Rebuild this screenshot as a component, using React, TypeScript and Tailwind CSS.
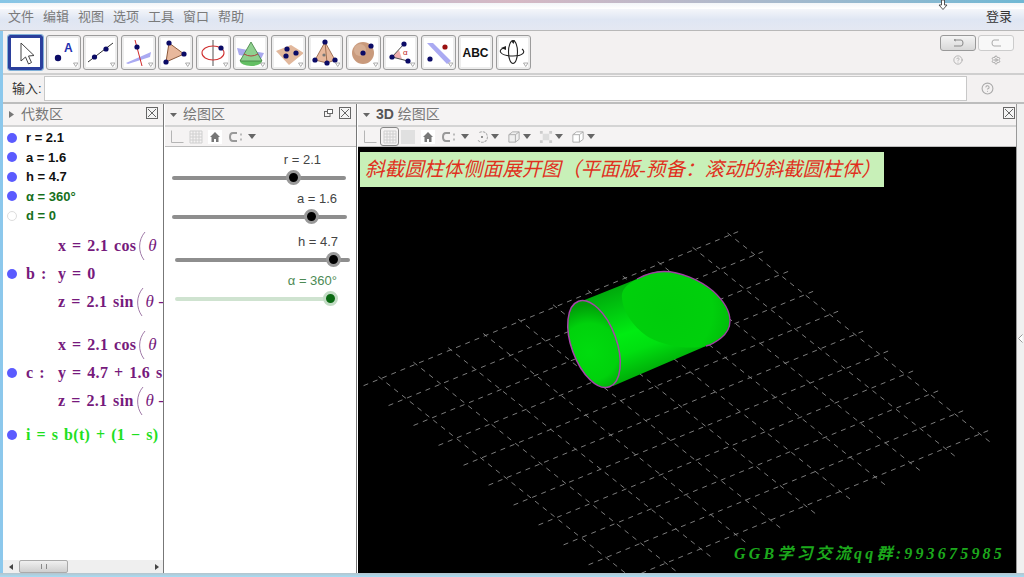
import React from 'react';
import { Settings, HelpCircle } from 'lucide-react';

const NAVY = '#0b0b66';

const Dot = ({ x, y, r = 2.6, c = NAVY }: { x: number; y: number; r?: number; c?: string }) => (
  <circle cx={x} cy={y} r={r} fill={c} />
);

const toolIcons: React.ReactNode[] = [
  <path d="M13 8 L13 26 L17.5 22 L20.5 29 L23.5 27.5 L20.5 21 L26 20.5 Z" fill="#fff" stroke="#444" strokeWidth="1" />,
  <>
    <Dot x={12} y={23} r={3.2} />
    <text x={18} y={17} fontSize="12" fontWeight="700" fill="#1f2fb0" fontFamily="Liberation Sans">A</text>
  </>,
  <>
    <line x1="5" y1="27" x2="30" y2="8" stroke="#333" strokeWidth="1" />
    <Dot x={11.5} y={22} />
    <Dot x={23} y={14} />
  </>,
  <>
    <polygon points="5,28 30,17 29,22 7,29" fill="#aaaaf2" />
    <line x1="14" y1="5" x2="21" y2="31" stroke="#d02828" strokeWidth="1" />
    <Dot x={16} y={12} />
  </>,
  <>
    <polygon points="11,8 26,19 8,27" fill="#e8b89c" stroke="#8c5a3c" strokeWidth="1" />
    <Dot x={11} y={8} />
    <Dot x={26} y={19} />
    <Dot x={8} y={27} />
  </>,
  <>
    <line x1="17" y1="5" x2="17" y2="31" stroke="#555" strokeWidth="1" />
    <ellipse cx="17" cy="18" rx="11" ry="7" fill="none" stroke="#d03030" strokeWidth="1.1" />
    <Dot x={25} y={13} />
  </>,
  <>
    <polygon points="4,13 31,18 28,24 6,20" fill="#a9a9ee" />
    <ellipse cx="18" cy="26" rx="11" ry="5" fill="#63bf63" />
    <polygon points="18,7 7,26 29,26" fill="#8fd08f" stroke="#3f7f3f" strokeWidth="0.8" />
    <path d="M11 19 Q18 23 25 19" stroke="#b04040" fill="none" strokeWidth="1" />
  </>,
  <>
    <polygon points="5,16 20,10 33,18 18,30" fill="#e2b89c" />
    <Dot x={16} y={14} />
    <Dot x={25} y={18} />
    <Dot x={15} y={21} />
  </>,
  <>
    <polygon points="17,7 7,25 19,28 27,25" fill="#e8b89c" stroke="#8c5a3c" strokeWidth="0.8" />
    <line x1="17" y1="7" x2="19" y2="28" stroke="#8c5a3c" strokeWidth="0.8" />
    <Dot x={17} y={7} />
    <Dot x={7} y={25} />
    <Dot x={27} y={25} />
    <Dot x={19} y={28} />
    <Dot x={16} y={20} r={1.6} c="#777" />
  </>,
  <>
    <circle cx="17" cy="18" r="11" fill="#c99a7c" />
    <circle cx="14" cy="15" r="6" fill="#e0bda4" opacity="0.6" />
    <Dot x={17} y={18} />
    <Dot x={25} y={11} />
  </>,
  <>
    <polygon points="9,22 16,15 19,24" fill="#f0b0b0" />
    <line x1="9" y1="22" x2="21" y2="9" stroke="#333" strokeWidth="0.9" />
    <line x1="9" y1="22" x2="25" y2="26" stroke="#333" strokeWidth="0.9" />
    <Dot x={21} y={9} />
    <Dot x={9} y={22} />
    <Dot x={25} y={26} />
    <text x={20} y={20} fontSize="8" fill="#c02020" fontFamily="Liberation Sans">α</text>
  </>,
  <>
    <polygon points="6,8 12,8 30,26 26,29" fill="#aaaaf2" />
    <Dot x={9} y={24} />
    <Dot x={24} y={12} c="#9a1010" />
  </>,
  <text x="17.5" y="22" fontSize="12" fontWeight="700" textAnchor="middle" fill="#111" fontFamily="Liberation Sans">ABC</text>,
  <>
    <ellipse cx="17" cy="17" rx="4.5" ry="11.5" fill="none" stroke="#222" strokeWidth="1.1" />
    <path d="M8 13 C1 15 4 21 17 21 C27 21 30 17 26 14" fill="none" stroke="#222" strokeWidth="1.1" />
    <path d="M5 13 L10 11 L10 15 Z" fill="#222" />
    <path d="M15 6 L19 5 L17.5 9 Z" fill="#222" />
  </>,
];

const ToolButton = ({ icon, selected, corner }: { icon: React.ReactNode; selected?: boolean; corner?: boolean }) => (
  <div
    className={
      selected
        ? 'w-[35px] h-[35px] rounded-[2px] border-[3px] border-[#2b3f9c] bg-white outline outline-1 outline-[#7fb0d8]'
        : 'w-[35px] h-[35px] rounded-[3px] border border-[#9c9c9c] bg-[#ededed] p-[2px]'
    }
  >
    <div className="relative w-full h-full bg-white">
      <svg viewBox="3 3 29 29" className="w-full h-full">
        {icon}
        {corner && <polygon points="27.5,28 32,28 29.7,31.5" fill="#fff" stroke="#999" strokeWidth="0.8" />}
      </svg>
    </div>
  </div>
);

const PanelHeader = ({ open, title, closeMr, extra }: { open: boolean; title: React.ReactNode; closeMr: string; extra?: boolean }) => (
  <div className="h-[23px] flex items-center bg-[#f5f3f3] border-b-2 border-[#d4d4d4] shrink-0">
    <svg width="9" height="9" viewBox="0 0 9 9" className="ml-[4px] mr-[5px]">
      {open ? <polygon points="1,3 8,3 4.5,7" fill="#666" /> : <polygon points="2,1 7,4.5 2,8" fill="#777" />}
    </svg>
    <span className="text-[14px] text-[#777]">{title}</span>
    <div className="flex-1" />
    {extra && (
      <svg width="9" height="9" viewBox="0 0 9 9" className="mr-[6px] mb-[3px]">
        <rect x="0.5" y="2.5" width="5.5" height="5" fill="none" stroke="#666" />
        <rect x="3.5" y="0.5" width="5" height="4" fill="#fff" stroke="#666" />
      </svg>
    )}
    <svg width="12" height="12" viewBox="0 0 12 12" className={`${closeMr} mb-[3px]`}>
      <rect x="0.5" y="0.5" width="11" height="11" fill="#f4f4f4" stroke="#666" />
      <path d="M2 2 L10 10 M10 2 L2 10" stroke="#666" strokeWidth="1" />
    </svg>
  </div>
);

const Bullet = ({ off }: { off?: boolean }) => (
  <div
    className={
      off
        ? 'w-[10px] h-[10px] rounded-full border border-[#ddd] bg-white shrink-0 ml-[4px]'
        : 'w-[10px] h-[10px] rounded-full bg-[#5b5bff] shrink-0 ml-[4px]'
    }
  />
);

const AlgebraRow = ({ text, green, off }: { text: string; green?: boolean; off?: boolean }) => (
  <div className="h-[19.5px] flex items-center">
    <Bullet off={off} />
    <span className={green ? 'ml-[9px] text-[13px] font-bold text-[#16701c]' : 'ml-[9px] text-[13px] font-bold text-[#111]'}>{text}</span>
  </div>
);

const Paren = () => (
  <svg width="9" height="30" viewBox="0 0 9 30" className="shrink-0 ml-[1px] mr-[2px]">
    <path d="M8 1 C1 9 1 21 7 29" fill="none" stroke="#a07aa8" strokeWidth="1" />
  </svg>
);

const MATH = "font-['Liberation_Serif',serif] font-bold text-[16px] tracking-[0.3px] [word-spacing:1.5px] whitespace-pre";
const THETA = "font-['Liberation_Serif',serif] font-normal italic text-[17px] whitespace-pre";

const MathRow = ({ label, children, bullet, className }: { label?: string; children: React.ReactNode; bullet?: boolean; className?: string }) => (
  <div className={`h-[28px] flex items-center overflow-hidden text-[#761a7c] ${className ?? ''}`}>
    {bullet ? <Bullet /> : <div className="w-[10px] ml-[4px] shrink-0" />}
    <span className={`${MATH} w-[32px] ml-[9px] shrink-0`}>{label}</span>
    {children}
  </div>
);

const Slider = ({ label, ml, width, pos, labelPr, mt, green }: { label: string; ml: number; width: number; pos: number; labelPr: number; mt: number; green?: boolean }) => (
  <div style={{ marginLeft: ml, width, marginTop: mt }} className="shrink-0">
    <div style={{ paddingRight: labelPr }} className={green ? 'h-[16px] leading-[16px] text-right text-[13px] text-[#4d8a55]' : 'h-[16px] leading-[16px] text-right text-[13px] text-[#444]'}>
      {label}
    </div>
    <div className={green ? 'relative h-[4px] mt-[8px] rounded-full bg-[#cfe3d0]' : 'relative h-[4px] mt-[8px] rounded-full bg-[#8e8e8e]'}>
      <div
        style={{ left: pos - 7.5 }}
        className={
          green
            ? 'absolute -top-[6px] w-[15px] h-[15px] rounded-full bg-[#0a6a12] border-[3px] border-[#c3dcc5]'
            : 'absolute -top-[6px] w-[15px] h-[15px] rounded-full bg-black border-[3px] border-[#999]'
        }
      />
    </div>
  </div>
);

const Caret = () => (
  <svg width="8" height="5" viewBox="0 0 8 5" className="ml-[2px] mr-[5px]">
    <polygon points="0,0 8,0 4,5" fill="#666" />
  </svg>
);

const Home = () => (
  <svg width="14" height="14" viewBox="0 0 14 14" className="bg-white">
    <path d="M7 2 L12 7 L10.5 7 L10.5 12 L8 12 L8 9 L6 9 L6 12 L3.5 12 L3.5 7 L2 7 Z" fill="#777" />
  </svg>
);

const AxesIcon = () => (
  <svg width="14" height="14" viewBox="0 0 14 14">
    <path d="M1.5 0.5 V12.5 H13.5" fill="none" stroke="#b5b5b5" strokeWidth="1" />
  </svg>
);

const GridIcon = () => (
  <svg width="14" height="14" viewBox="0 0 14 14">
    <path d="M1 1H13M1 4H13M1 7H13M1 10H13M1 13H13M1 1V13M4 1V13M7 1V13M10 1V13M13 1V13" stroke="#cfcfcf" strokeWidth="1" fill="none" />
  </svg>
);

const CIcon = () => (
  <svg width="18" height="14" viewBox="0 0 18 14" className="ml-[6px]">
    <path d="M9 3 H5 Q2 3 2 7 Q2 11 5 11 H9" fill="none" stroke="#999" strokeWidth="2" />
    <path d="M12 4.5h2M12 9.5h2" stroke="#bbb" strokeWidth="2" />
  </svg>
);

const u = { x: 25, y: 19.9 };
const v = { x: 34.9, y: -14.35 };
const P = (i: number, j: number) => ({ x: 381 + i * u.x + j * v.x, y: 377.5 + i * u.y + j * v.y });

const GridLines = () => {
  const lines: React.ReactNode[] = [];
  for (let i = 0; i <= 10; i++) {
    const a = P(i, -0.5);
    const b = P(i, 10.25);
    lines.push(<line key={`a${i}`} x1={a.x} y1={a.y} x2={b.x} y2={b.y} />);
  }
  for (let j = 0; j <= 10; j++) {
    const a = P(-0.1, j);
    const b = P(10.4, j);
    lines.push(<line key={`b${j}`} x1={a.x} y1={a.y} x2={b.x} y2={b.y} />);
  }
  return (
    <g stroke="#8a8a8a" strokeWidth="0.9" strokeDasharray="5 5" fill="none">
      {lines}
    </g>
  );
};

const BODY = 'M582 300 L637 278 C648 272 655 270.5 664 270.5 C680 270.5 700 279 713 290 C724 300 730 311 730 320 C730 328 726 333 721 337 C716 341 710 344 706 345 L613 385 Z';

const Cylinder = () => (
  <g>
    <defs>
      <linearGradient id="bodyGrad" gradientUnits="userSpaceOnUse" x1="585" y1="296" x2="616" y2="386">
        <stop offset="0" stopColor="#00a80c" />
        <stop offset="0.5" stopColor="#00ec12" />
        <stop offset="0.7" stopColor="#00e010" />
        <stop offset="1" stopColor="#00a808" />
      </linearGradient>
      <radialGradient id="capGrad" gradientUnits="userSpaceOnUse" cx="600" cy="350" r="48">
        <stop offset="0" stopColor="#00dc0e" />
        <stop offset="0.6" stopColor="#00d20c" />
        <stop offset="1" stopColor="#009a08" />
      </radialGradient>
      <radialGradient id="backGrad" gradientUnits="userSpaceOnUse" cx="665" cy="310" r="68">
        <stop offset="0" stopColor="#00cc0c" />
        <stop offset="0.7" stopColor="#00d00c" />
        <stop offset="1" stopColor="#00bc0a" />
      </radialGradient>
    </defs>
    <path d={BODY} fill="url(#bodyGrad)" />
    <path
      d="M637 278 C625 284 621 290 622 297 C623 312 635 328 650 337 C665 345 690 349 706 345 C710 344 716 341 721 337 C726 333 730 328 730 320 C730 311 724 300 713 290 C700 279 680 270.5 664 270.5 C655 270.5 648 272 637 278 Z"
      fill="url(#backGrad)"
    />
    <path d="M637 278 C648 272 655 270.5 664 270.5 C680 270.5 700 279 713 290 C724 300 730 311 730 320 C730 328 726 333 721 337 C716 341 710 344 706 345" fill="none" stroke="#a03ea4" strokeWidth="1.3" />
    <ellipse cx="594" cy="343" rx="45.5" ry="22.5" transform="rotate(70 594 343)" fill="url(#capGrad)" stroke="#a645aa" strokeWidth="1.5" />
  </g>
);

export default function App() {
  return (
    <div className="w-[1024px] h-[577px] overflow-hidden flex flex-col bg-[#f7f7f7] font-['Liberation_Sans','Noto_Sans_CJK_SC',sans-serif] relative">
      <div className="h-[3px] shrink-0 bg-gradient-to-r from-[#86c6e6] via-[#d6b8c4] to-[#6fb8d4]" />
      <div className="h-[6px] shrink-0 bg-gradient-to-b from-[#f2f5f8] to-white" />

      <div className="h-[22px] shrink-0 flex items-center pl-[8px] pr-[12px] pb-[6px] bg-gradient-to-b from-[#f4f6fa] via-[#dfe6f3] to-[#e4e8f2] border-b border-[#b8b8b8]">
        {['文件', '编辑', '视图', '选项', '工具', '窗口', '帮助'].map((m) => (
          <span key={m} className="text-[13px] text-[#7a7a7a] mr-[9px]">{m}</span>
        ))}
        <div className="flex-1" />
        <span className="text-[13px] text-[#333]">登录</span>
      </div>

      <div className="flex flex-1 min-h-0">
        <div className="w-[3px] shrink-0 bg-[#8cc8ec]" />
        <div className="flex-1 min-w-0 flex flex-col">
          <div className="h-[44px] shrink-0 flex items-center bg-[#f3f1f1] border-b-2 border-[#cfcfcf] pl-[5px]">
            <div className="flex gap-[2.5px]">
              {toolIcons.map((ic, i) => (
                <ToolButton key={i} icon={ic} selected={i === 0} corner={i > 0 && i !== 12} />
              ))}
            </div>
            <div className="flex-1" />
            <div className="w-[76px] mr-[9px] mb-[4px] flex flex-col items-center">
              <div className="flex gap-[2px]">
                <div className="w-[36px] h-[16px] rounded-[3px] border border-[#999] bg-gradient-to-b from-[#f4f4f4] to-[#d8d8d8] flex items-center justify-center">
                  <svg width="11" height="8" viewBox="0 0 11 8"><path d="M3 1H8Q10 1 10 4Q10 7 8 7H1M3 0L1 1L3 2" fill="none" stroke="#888" /></svg>
                </div>
                <div className="w-[36px] h-[16px] rounded-[3px] border border-[#ccc] bg-[#f8f8f8] flex items-center justify-center">
                  <svg width="11" height="8" viewBox="0 0 11 8"><path d="M8 1H3Q1 1 1 4Q1 7 3 7H10" fill="none" stroke="#aaa" /></svg>
                </div>
              </div>
              <div className="flex w-full justify-around mt-[4px]">
                <HelpCircle size={10} color="#aaa" />
                <Settings size={10} color="#999" />
              </div>
            </div>
          </div>

          <div className="h-[29px] shrink-0 flex items-center bg-[#f3f1f1] border-b-2 border-[#bdbdbd]">
            <span className="ml-[9px] text-[13px] text-[#333] w-[32px]">输入:</span>
            <div className="w-[923px] h-[25px] bg-white border border-[#c8c8c8]" />
            <HelpCircle size={13} color="#aaa" className="ml-[14px]" />
          </div>

          <div className="flex-1 min-h-0 flex">
            <div className="w-[161px] shrink-0 flex flex-col bg-white border-r-[1px] border-[#777]">
              <PanelHeader open={false} title="代数区" closeMr="mr-[5px]" />
              <div className="pt-[1px] flex-1 min-h-0 overflow-hidden">
                <AlgebraRow text="r = 2.1" />
                <AlgebraRow text="a = 1.6" />
                <AlgebraRow text="h = 4.7" />
                <AlgebraRow text="α = 360°" green />
                <AlgebraRow text="d = 0" green off />
                <div className="mt-[6px]">
                  <MathRow><span className={MATH}>x = 2.1 cos</span><Paren /><span className={THETA}>θ</span></MathRow>
                  <MathRow label="b :" bullet><span className={MATH}>y = 0</span></MathRow>
                  <MathRow><span className={MATH}>z = 2.1 sin</span><Paren /><span className={THETA}>θ -</span></MathRow>
                  <MathRow className="mt-[15px]"><span className={MATH}>x = 2.1 cos</span><Paren /><span className={THETA}>θ</span></MathRow>
                  <MathRow label="c :" bullet><span className={MATH}>y = 4.7 + 1.6 s</span></MathRow>
                  <MathRow><span className={MATH}>z = 2.1 sin</span><Paren /><span className={THETA}>θ -</span></MathRow>
                  <div className="h-[28px] mt-[6px] flex items-center overflow-hidden text-[#1ee01e]">
                    <Bullet />
                    <span className={`${MATH} ml-[9px]`}>i = s b(t) + (1 − s)</span>
                  </div>
                </div>
              </div>
              <div className="h-[13px] shrink-0 flex items-center bg-[#efefef] pl-[6px] pr-[4px]">
                <svg width="4" height="6" viewBox="0 0 4 6"><polygon points="4,0 0,3 4,6" fill="#444" /></svg>
                <div className="ml-[6px] w-[49px] h-[13px] rounded-[2px] border border-[#aaa] bg-gradient-to-b from-[#f0f0f0] to-[#cfcfcf] flex items-center justify-center">
                  <div className="w-[6px] h-[5px] border-x border-[#888]" />
                </div>
                <div className="flex-1" />
                <svg width="4" height="6" viewBox="0 0 4 6"><polygon points="0,0 4,3 0,6" fill="#444" /></svg>
              </div>
            </div>

            <div className="w-[1px] shrink-0 bg-white" />

            <div className="w-[191px] shrink-0 flex flex-col bg-white">
              <PanelHeader open title="绘图区" closeMr="mr-[5px]" extra />
              <div className="h-[20px] shrink-0 flex items-center bg-[#f5f3f3] border-b border-[#bdbdbd] pl-[5px]">
                <AxesIcon />
                <div className="w-[5px]" />
                <GridIcon />
                <div className="w-[5px]" />
                <Home />
                <CIcon />
                <Caret />
              </div>
              <div className="flex-1 flex flex-col">
                <Slider label="r = 2.1" ml={7} width={174} pos={121} labelPr={25} mt={5} />
                <Slider label="a = 1.6" ml={7} width={175} pos={139} labelPr={10} mt={11} />
                <Slider label="h = 4.7" ml={10} width={175} pos={158} labelPr={12} mt={15} />
                <Slider label="α = 360°" ml={10} width={162} pos={155} labelPr={0} mt={11} green />
              </div>
            </div>

            <div className="w-[1px] shrink-0 bg-[#777]" />
            <div className="w-[1px] shrink-0 bg-white" />

            <div className="flex-1 min-w-0 flex flex-col border-r border-[#999]">
              <PanelHeader open title={<><span className="font-bold text-[#555]">3D</span> 绘图区</>} closeMr="mr-[1px]" />
              <div className="h-[20px] shrink-0 flex items-center bg-[#f5f3f3] border-b border-[#bdbdbd] pl-[5px]">
                <AxesIcon />
                <div className="ml-[3px] w-[19px] h-[19px] rounded-[3px] border border-[#888] flex items-center justify-center"><GridIcon /></div>
                <div className="ml-[2px] w-[14px] h-[14px] bg-[#e0e0e0]" />
                <div className="w-[6px]" />
                <Home />
                <CIcon />
                <Caret />
                <svg width="14" height="14" viewBox="0 0 16 16" className="ml-[1px]">
                  <path d="M5 3 A6 6 0 1 1 3 11" fill="none" stroke="#aaa" strokeWidth="1.2" strokeDasharray="3 1" />
                  <circle cx="8" cy="8" r="1.2" fill="#777" />
                </svg>
                <Caret />
                <svg width="14" height="14" viewBox="0 0 15 15" className="ml-[3px]">
                  <path d="M2 5 L6 2 H13 V10 L9 13 H2 Z M2 5 H9 V13 M9 5 L13 2" fill="#efefef" stroke="#aaa" />
                </svg>
                <Caret />
                <svg width="14" height="14" viewBox="0 0 15 15" className="ml-[3px]">
                  <rect x="4" y="4" width="7" height="7" fill="#ddd" />
                  <path d="M1 1h3v3h-3zM11 1h3v3h-3zM1 11h3v3h-3zM11 11h3v3h-3z" fill="#ccc" />
                </svg>
                <Caret />
                <svg width="14" height="14" viewBox="0 0 15 15" className="ml-[3px]">
                  <path d="M2 5 L6 2 H13 V10 L9 13 H2 Z M2 5 H9 V13 M9 5 L13 2" fill="#fff" stroke="#aaa" />
                </svg>
                <Caret />
              </div>
              <div className="relative flex-1 min-h-0 bg-black overflow-hidden">
                <svg viewBox="358 146 658 427" className="absolute inset-0 w-[658px] h-[427px]">
                  <GridLines />
                  <Cylinder />
                </svg>
                <div className="relative ml-[2px] mt-[5px] w-[524px] h-[35px] bg-[#c8f0b8] flex items-center pl-[5px] text-[19.6px] italic font-normal text-[#e0301e] font-['Liberation_Serif','Noto_Sans_CJK_SC',serif] whitespace-nowrap">
                  斜截圆柱体侧面展开图（平面版-预备：滚动的斜截圆柱体）
                </div>
                <div className="absolute right-[11px] bottom-[7px] text-[16px] italic font-bold tracking-[3.2px] text-[#1ca81c] font-['Liberation_Serif','Noto_Sans_CJK_SC',serif] whitespace-nowrap">
                  GGB学习交流qq群:993675985
                </div>
              </div>
            </div>
            <div className="w-[7px] shrink-0 bg-[#f0f0f0] flex items-center justify-center">
              <svg width="5" height="9" viewBox="0 0 5 9"><path d="M4.5 0.5 L0.5 4.5 L4.5 8.5" fill="#fff" stroke="#999" /></svg>
            </div>
          </div>
        </div>
      </div>
      <div className="h-[4px] shrink-0 bg-gradient-to-b from-[#b5c4cc] to-[#a4dcf4]" />

      <svg width="10" height="10" viewBox="0 0 10 10" className="absolute left-[938px] top-0">
        <path d="M3.5 0 H6.5 V5 H9 L5 9.5 L1 5 H3.5 Z" fill="#fff" stroke="#444" strokeWidth="0.9" />
      </svg>
    </div>
  );
}
